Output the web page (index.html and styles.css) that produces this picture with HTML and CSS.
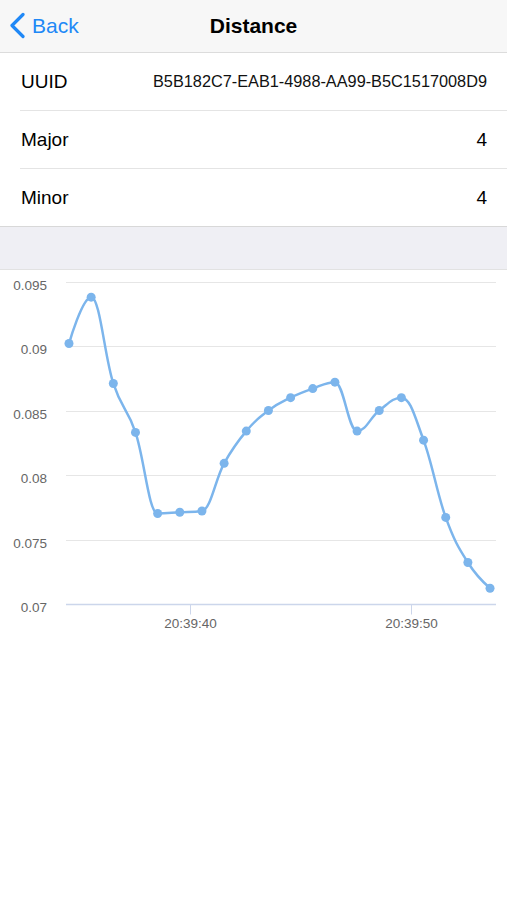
FILE: index.html
```html
<!DOCTYPE html>
<html lang="en">
<head>
    <meta charset="UTF-8">
    <meta name="viewport" content="width=device-width, initial-scale=1.0">
    <title>Distance</title>
    <link rel="stylesheet" href="styles.css">
</head>
<body>
    <header class="navbar">
        <a class="back" href="#">
            <svg class="chevron" width="16" height="28" viewBox="0 0 16 28">
                <polyline points="13,2.5 2,13.5 13,24.5" fill="none" stroke="#2088f6" stroke-width="3.2" stroke-linecap="round" stroke-linejoin="round"/>
            </svg>
            <span>Back</span>
        </a>
        <h1>Distance</h1>
        <span></span>
    </header>

    <ul class="info-list">
        <li>
            <span class="label">UUID</span>
            <span class="value uuid">B5B182C7-EAB1-4988-AA99-B5C1517008D9</span>
        </li>
        <li>
            <span class="label">Major</span>
            <span class="value">4</span>
        </li>
        <li>
            <span class="label">Minor</span>
            <span class="value">4</span>
        </li>
    </ul>

    <div class="section-gap"></div>

    <div class="chart">
        <!-- chart is drawn by chart.js -->
        <svg id="distanceChart" width="507" height="380" viewBox="0 270 507 380"></svg>
    </div>

    <script src="chart.js"></script>
</body>
</html>
```

FILE: styles.css
```css
body {
    font-family: "Liberation Sans", Arial, sans-serif;
    margin: 0;
    padding: 0;
    background-color: #fff;
    color: #000;
}
.navbar {
    display: grid;
    grid-template-columns: 1fr auto 1fr;
    align-items: center;
    height: 52px;
    background-color: #f7f7f7;
    border-bottom: 1px solid #dcdcdc;
}
.back {
    display: flex;
    align-items: center;
    gap: 6px;
    padding-left: 10px;
    color: #2088f6;
    text-decoration: none;
    font-size: 21px;
}
.chevron {
    display: block;
}
.navbar h1 {
    margin: 0;
    font-size: 21px;
    font-weight: bold;
}
.info-list {
    list-style: none;
    margin: 0;
    padding: 0;
}
.info-list li {
    box-sizing: border-box;
    display: flex;
    justify-content: space-between;
    align-items: center;
    height: 58px;
    margin-left: 20px;
    padding: 0 20px 0 1px;
    border-bottom: 1px solid #e4e4e4;
    font-size: 19px;
}
.info-list li:last-child {
    height: 57px;
    border-bottom: none;
}
.value.uuid {
    font-size: 16.3px;
    color: #111;
}
.section-gap {
    height: 42px;
    background-color: #efeff4;
    border-top: 1px solid #d8d8d8;
    border-bottom: 1px solid #e2e2e2;
}
.chart svg {
    display: block;
}
.chart text {
    font-family: "Liberation Sans", Arial, sans-serif;
    font-size: 13.5px;
    fill: #666;
}
```

FILE: chart.js
```js
// Distance readings, one per second
const data = [0.0903, 0.0939, 0.0872, 0.0834, 0.0771, 0.0772, 0.0773, 0.0810, 0.0835, 0.0851,
              0.0861, 0.0868, 0.0873, 0.0835, 0.0851, 0.0861, 0.0828, 0.0768, 0.0733, 0.0713];

const plotLeft = 66, plotRight = 496;
const yMin = 0.07, yBottom = 605, pxPerUnit = 12880;

function toY(v) { return yBottom - (v - yMin) * pxPerUnit; }

const points = data.map((v, i) => ({ x: 69 + i * 22.16, y: toY(v) }));

// Spline control points (same approach as Highcharts)
function splinePath(pts) {
    const smoothing = 1.5, denom = smoothing + 1;
    let d = `M ${pts[0].x} ${pts[0].y}`;
    pts.forEach((p, i) => {
        if (i === 0) return;
        let leftX = p.x, leftY = p.y;
        if (i < pts.length - 1) {
            const last = pts[i - 1], next = pts[i + 1];
            leftX = (smoothing * p.x + last.x) / denom;
            leftY = (smoothing * p.y + last.y) / denom;
            const rightX = (smoothing * p.x + next.x) / denom;
            let rightY = (smoothing * p.y + next.y) / denom;
            const correction = ((rightY - leftY) * (rightX - p.x)) / (rightX - leftX) + p.y - rightY;
            leftY += correction;
            rightY += correction;
            if (leftY > last.y && leftY > p.y) {
                leftY = Math.max(last.y, p.y); rightY = 2 * p.y - leftY;
            } else if (leftY < last.y && leftY < p.y) {
                leftY = Math.min(last.y, p.y); rightY = 2 * p.y - leftY;
            }
            if (rightY > next.y && rightY > p.y) {
                rightY = Math.max(next.y, p.y); leftY = 2 * p.y - rightY;
            } else if (rightY < next.y && rightY < p.y) {
                rightY = Math.min(next.y, p.y); leftY = 2 * p.y - rightY;
            }
            p.rightX = rightX;
            p.rightY = rightY;
        }
        const prev = pts[i - 1];
        const cx = prev.rightX !== undefined ? prev.rightX : prev.x;
        const cy = prev.rightY !== undefined ? prev.rightY : prev.y;
        d += ` C ${cx} ${cy} ${leftX} ${leftY} ${p.x} ${p.y}`;
    });
    return d;
}

let svg = '';

// Grid lines and y labels
const ticks = ['0.07', '0.075', '0.08', '0.085', '0.09', '0.095'];
ticks.forEach((label, k) => {
    const y = Math.round(yBottom - k * 64.4) - 0.5;
    if (k > 0) {
        svg += `<line x1="${plotLeft}" x2="${plotRight}" y1="${y}" y2="${y}" stroke="#e6e6e6" stroke-width="1"/>`;
    }
    svg += `<text x="47" y="${y + 7}" text-anchor="end">${label}</text>`;
});

// X axis
const axisY = yBottom - 0.5;
svg += `<line x1="${plotLeft}" x2="${plotRight}" y1="${axisY}" y2="${axisY}" stroke="#ccd6eb" stroke-width="1.5"/>`;
[{ x: 190.5, label: '20:39:40' }, { x: 411.5, label: '20:39:50' }].forEach(t => {
    svg += `<line x1="${t.x}" x2="${t.x}" y1="${axisY}" y2="${axisY + 10}" stroke="#ccd6eb" stroke-width="1"/>`;
    svg += `<text x="${t.x}" y="628" text-anchor="middle">${t.label}</text>`;
});

// Series
svg += `<path d="${splinePath(points)}" fill="none" stroke="#7cb5ec" stroke-width="2.5" stroke-linejoin="round"/>`;
points.forEach(p => {
    svg += `<circle cx="${p.x}" cy="${p.y}" r="4.5" fill="#7cb5ec"/>`;
});

document.getElementById('distanceChart').innerHTML = svg;
```
